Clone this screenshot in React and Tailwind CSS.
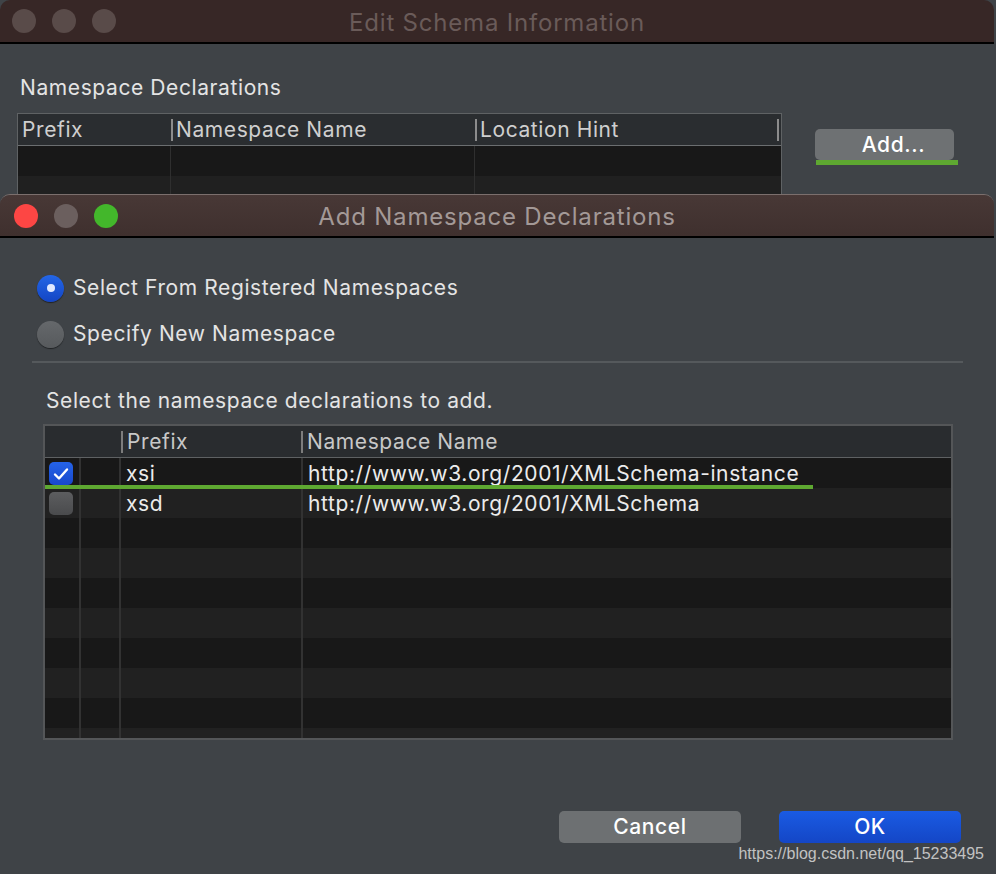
import React from "react";

const font = { fontFamily: "Inter, 'Noto Sans', sans-serif" };

function TrafficLights({ colors }) {
  return (
    <div className="flex gap-[16px]">
      {colors.map((c, i) => (
        <div key={i} className={`w-[24px] h-[24px] rounded-full ${c}`} />
      ))}
    </div>
  );
}

function TitleBar({ title, lights, bg, titleColor, pl }) {
  return (
    <div className={`grid grid-cols-[1fr_auto_1fr] items-center border-b-2 border-black ${bg}`}>
      <div className={pl}>
        <TrafficLights colors={lights} />
      </div>
      <div className={`text-[24px] tracking-[0.8px] pt-[3px] ${titleColor}`}>{title}</div>
      <div />
    </div>
  );
}

function EditSchemaWindow() {
  // background window, only the upper part is visible
  return (
    <div className="h-[194px] overflow-hidden rounded-t-[10px] bg-[#3f4347] w-[994px]">
      <TitleBar
        title="Edit Schema Information"
        lights={["bg-[#594b49]", "bg-[#594b49]", "bg-[#594b49]"]}
        bg="bg-[#372726] h-[44px]"
        titleColor="text-[#6a5b59]"
        pl="pl-[12px]"
      />
      <div className="pl-[17px] pt-[32px]">
        <div className="pl-[3px] text-[21px] tracking-[0.6px] leading-[24px] text-[#e4e4e4]">Namespace Declarations</div>
        <div className="flex mt-[13px]">
          <div className="w-[765px] border border-[#5f6264]">
            <div className="h-[32px] bg-[#2a2d30] border-b border-[#6b6e70] grid grid-cols-[153px_304px_1fr] items-center text-[21px] tracking-[0.6px] text-[#cfcfcf]">
              <div className="pl-[4px]">Prefix</div>
              <div className="flex items-center">
                <div className="w-[2px] h-[22px] bg-[#8c8c8c]" />
                <span className="pl-[3px]">Namespace Name</span>
              </div>
              <div className="flex items-center">
                <div className="w-[2px] h-[22px] bg-[#8c8c8c]" />
                <span className="pl-[3px] flex-1">Location Hint</span>
                <div className="w-[2px] h-[22px] bg-[#8c8c8c] mr-[2px]" />
              </div>
            </div>
            {["bg-[#181818]", "bg-[#202020]"].map((b, i) => (
              <div key={i} className={`h-[30px] grid grid-cols-[153px_304px_1fr] ${b}`}>
                <div className="border-r border-[#2f2f2f]" />
                <div className="border-r border-[#2f2f2f]" />
                <div />
              </div>
            ))}
          </div>
          <div className="ml-[33px] mt-[16px] flex flex-col">
            <div className="w-[139px] h-[31px] rounded-[5px] bg-[#6e7173] text-white text-[21px] tracking-[0.6px] font-medium flex items-center justify-center pl-[18px]">
              Add...
            </div>
            <div className="w-[142px] h-[5px] bg-[#5ea831] ml-[1px]" />
          </div>
        </div>
      </div>
    </div>
  );
}

function Radio({ checked, label }) {
  return (
    <div className="flex items-center h-[26px]">
      {checked ? (
        <div className="w-[27px] h-[27px] rounded-full bg-gradient-to-b from-[#2466e6] to-[#1445c4] flex items-center justify-center shadow-[0_1px_1px_rgba(0,0,0,0.5)]">
          <div className="w-[8px] h-[8px] rounded-full bg-[#dfe8ff]" />
        </div>
      ) : (
        <div className="w-[27px] h-[27px] rounded-full bg-gradient-to-b from-[#65686b] to-[#575a5d] shadow-[0_1px_1px_rgba(0,0,0,0.5)]" />
      )}
      <span className="ml-[9px] text-[21px] tracking-[0.6px] text-[#e4e4e4]">{label}</span>
    </div>
  );
}

function Checkbox({ checked }) {
  if (checked) {
    return (
      <div className="w-[24px] h-[23px] rounded-[5px] bg-gradient-to-b from-[#2563e8] to-[#1848cc] flex items-center justify-center">
        <svg width="16" height="14" viewBox="0 0 16 14" fill="none">
          <path d="M2 7.5 L6 11.5 L14 2.5" stroke="white" strokeWidth="2.4" strokeLinecap="round" strokeLinejoin="round" />
        </svg>
      </div>
    );
  }
  return <div className="w-[24px] h-[23px] rounded-[5px] bg-gradient-to-b from-[#5c5d5f] to-[#4a4b4d]" />;
}

const rows = [
  { checked: true, prefix: "xsi", ns: "http://www.w3.org/2001/XMLSchema-instance" },
  { checked: false, prefix: "xsd", ns: "http://www.w3.org/2001/XMLSchema" },
  null, null, null, null, null, null, null, null,
];

function AddNamespaceWindow() {
  return (
    <div className="relative w-[994px] rounded-t-[10px] bg-[#3f4347] border-t border-[#7b6f6d] overflow-hidden">
      <TitleBar
        title="Add Namespace Declarations"
        lights={["bg-[#fd4644]", "bg-[#6b5f5e]", "bg-[#43b72b]"]}
        bg="bg-gradient-to-b from-[#483836] to-[#3f302e] h-[43px]"
        titleColor="text-[#a39997]"
        pl="pl-[14px]"
      />
      <div className="h-[636px] flex flex-col">
        <div className="pl-[37px] pt-[37px] flex flex-col gap-[20px]">
          <Radio checked label="Select From Registered Namespaces" />
          <Radio label="Specify New Namespace" />
        </div>
        <div className="ml-[32px] w-[931px] h-[2px] bg-[#55595c] mt-[14px]" />
        <div className="ml-[46px] mt-[26px] text-[21px] tracking-[0.6px] leading-[24px] text-[#e4e4e4]">
          Select the namespace declarations to add.
        </div>
        <div className="relative ml-[43px] mt-[11px] w-[910px] h-[316px] border-2 border-[#545658] overflow-hidden bg-[#181818]">
          <div className="h-[32px] bg-[#292c2f] border-b border-[#5e6163] grid grid-cols-[76px_180px_1fr] items-center text-[21px] tracking-[0.6px] text-[#c8c8c8]">
            <div />
            <div className="flex items-center">
              <div className="w-[2px] h-[22px] bg-[#7d7d7d]" />
              <span className="pl-[4px]">Prefix</span>
            </div>
            <div className="flex items-center">
              <div className="w-[2px] h-[22px] bg-[#7d7d7d]" />
              <span className="pl-[4px]">Namespace Name</span>
            </div>
          </div>
          {rows.map((r, i) => (
            <div
              key={i}
              className={`h-[30px] grid grid-cols-[36px_40px_182px_1fr] text-[21px] tracking-[0.6px] text-[#ececec] ${i % 2 === 0 ? "bg-[#181818]" : "bg-[#212121]"}`}
            >
              <div className="border-r-2 border-[#323232] flex items-center pl-[4px]">
                {r && <Checkbox checked={r.checked} />}
              </div>
              <div className="border-r-2 border-[#323232]" />
              <div className="border-r-2 border-[#323232] flex items-center pl-[5px]">{r && r.prefix}</div>
              <div className="flex items-center pl-[5px]">{r && r.ns}</div>
            </div>
          ))}
          {/* green annotation underline */}
          <div className="absolute left-0 top-[59px] w-[768px] h-[4px] bg-[#5ea831]" />
        </div>
        <div className="flex justify-end gap-[38px] pr-[33px] mt-[71px]">
          <div className="w-[182px] h-[32px] rounded-[5px] bg-[#6d7072] text-white text-[21px] tracking-[0.6px] font-medium flex items-center justify-center">
            Cancel
          </div>
          <div className="w-[182px] h-[32px] rounded-[5px] bg-gradient-to-b from-[#1a5be3] to-[#1446c6] text-white text-[21px] tracking-[0.6px] font-medium flex items-center justify-center">
            OK
          </div>
        </div>
      </div>
      <div
        className="absolute right-[10px] bottom-[8px] text-[16px] text-[#c2c2c2]"
        style={{ fontFamily: "'Liberation Sans', Arial, sans-serif" }}
      >
        https://blog.csdn.net/qq_15233495
      </div>
    </div>
  );
}

export default function App() {
  return (
    <div className="w-[996px] h-[874px] bg-[#3f4347] overflow-hidden" style={font}>
      <EditSchemaWindow />
      <AddNamespaceWindow />
    </div>
  );
}
